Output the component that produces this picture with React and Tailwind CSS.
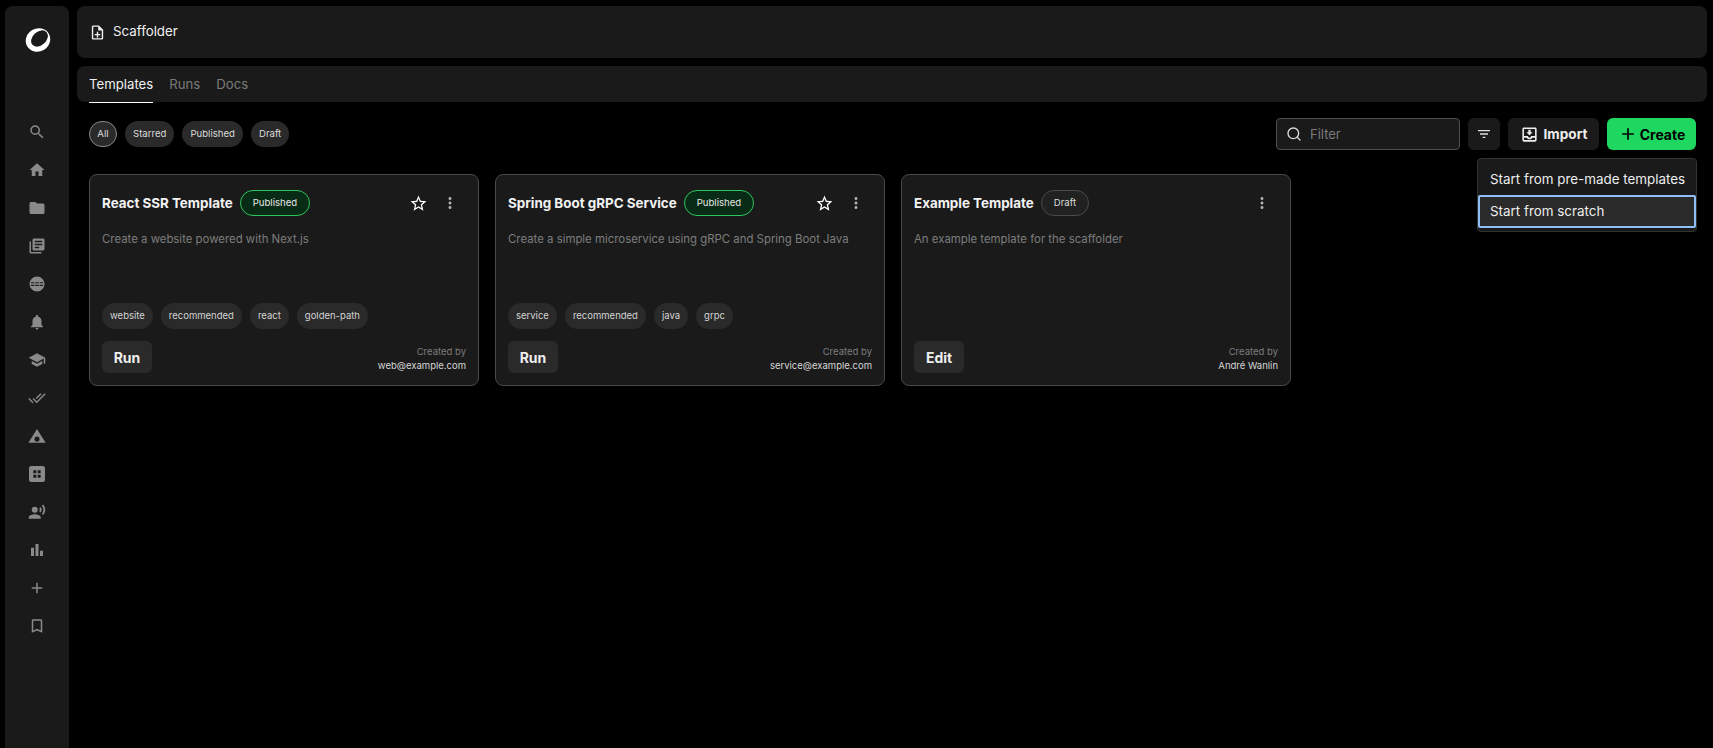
import React from "react";
import { Search } from "lucide-react";
import {
  MdSearch, MdHome, MdFolder, MdLibraryBooks, MdNotifications, MdSchool, MdDoneAll,
  MdRecordVoiceOver, MdBarChart, MdAdd, MdBookmarkBorder, MdOutlineNoteAdd,
  MdStarBorder, MdMoreVert, MdFilterList, MdOutlineMoveToInbox,
} from "react-icons/md";

const BallIcon = () => (
  <svg viewBox="0 0 24 24" className="w-[18px] h-[18px]" fill="currentColor">
    <path fillRule="evenodd" d="M12 2a10 10 0 1 0 0 20 10 10 0 0 0 0-20ZM4 9.500h4.500V11H4V9.500Zm5.700 0h4.600V11H9.700V9.500Zm5.800 0H20V11h-4.500V9.500ZM4 13h4.500v1.500H4V13Zm5.700 0h4.600v1.500H9.700V13Zm5.800 0H20v1.500h-4.500V13Z" />
  </svg>
);
const TriangleIcon = () => (
  <svg viewBox="0 0 24 24" className="w-[18px] h-[18px]" fill="currentColor">
    <path fillRule="evenodd" d="M12 2.500 23.500 21H.5L12 2.500Zm0 10a3.400 3.400 0 1 0 0 6.800 3.400 3.400 0 0 0 0-6.800Z" />
  </svg>
);
const GridIcon = () => (
  <svg viewBox="0 0 24 24" className="w-4 h-4" fill="currentColor">
    <path fillRule="evenodd" d="M3.500 0h17A3.500 3.500 0 0 1 24 3.500v17a3.500 3.500 0 0 1-3.500 3.500h-17A3.500 3.500 0 0 1 0 20.500v-17A3.500 3.500 0 0 1 3.500 0ZM6.500 6.500v4.500H11V6.500H6.500Zm6.500 0v4.500h4.500V6.500H13ZM6.500 13v4.500H11V13H6.500Zm6.500 0v4.500h4.500V13H13Z" />
  </svg>
);
const Logo = () => (
  <svg viewBox="0 0 26 24" className="w-[26px] h-[24px]">
    <ellipse cx="13" cy="12" rx="12.500" ry="11.500" fill="#fff" transform="rotate(-30 13 12)" />
    <ellipse cx="14.500" cy="10.500" rx="9.500" ry="6.800" fill="#1a1a1a" transform="rotate(-42 14.500 10.500)" />
  </svg>
);

const navIcons = [
  <MdSearch size={18} />, <MdHome size={18} />, <MdFolder size={18} />, <MdLibraryBooks size={18} />,
  <BallIcon />, <MdNotifications size={18} />, <MdSchool size={18} />, <MdDoneAll size={18} />,
  <TriangleIcon />, <GridIcon />, <MdRecordVoiceOver size={18} />, <MdBarChart size={18} />,
  <MdAdd size={18} />, <MdBookmarkBorder size={18} />,
];

const templates = [
  { title: "React SSR Template", status: "Published", desc: "Create a website powered with Next.js", tags: ["website", "recommended", "react", "golden-path"], action: "Run", by: "web@example.com", star: true },
  { title: "Spring Boot gRPC Service", status: "Published", desc: "Create a simple microservice using gRPC and Spring Boot Java", tags: ["service", "recommended", "java", "grpc"], action: "Run", by: "service@example.com", star: true },
  { title: "Example Template", status: "Draft", desc: "An example template for the scaffolder", tags: [], action: "Edit", by: "André Wanlin", star: false },
];

function Card({ t }) {
  return (
    <div className="w-[390px] h-[212px] rounded-lg border border-[#4a4a4a] bg-[#1a1a1a] pt-[15px] pb-3 px-3 flex flex-col">
      <div className="flex items-center h-[26px]">
        <span className="text-[13.400px] leading-[26px] font-bold text-[#f2f2f2]">{t.title}</span>
        <span className={`ml-[7px] h-[26px] flex items-center rounded-full border text-[9.600px] ${t.status === "Published" ? "px-[12px] border-[#2fc45e] bg-[#072b14] text-[#e8e8e8]" : "px-[12px] border-[#4a4a4a] bg-[#212121] text-[#dddddd]"}`}>
          {t.status}
        </span>
        <div className="ml-auto flex items-center">
          {t.star && <MdStarBorder size={19} className="text-white mr-[13px]" />}
          <MdMoreVert size={18} className="text-[#b0b0b0] mr-[7px]" />
        </div>
      </div>
      <p className="mt-[13px] text-[11.400px] leading-5 text-[#7d7d7d]">{t.desc}</p>
      <div className="mt-auto flex items-center gap-2 h-[26px]">
        {t.tags.map((tag) => (
          <span key={tag} className="h-[26px] flex items-center rounded-full bg-[#2a2a2a] px-2 text-[9.500px] text-[#d4d4d4]">{tag}</span>
        ))}
      </div>
      <div className="mt-3 flex items-end justify-between">
        <button className="h-8 w-[50px] rounded-md bg-[#2a2a2a] text-[14px] font-bold text-[#eeeeee]">{t.action}</button>
        <div className="text-right text-[9.500px] leading-[14px]">
          <div className="text-[#7d7d7d]">Created by</div>
          <div className="text-[#d6d6d6]">{t.by}</div>
        </div>
      </div>
    </div>
  );
}

export default function App() {
  return (
    <div className="relative h-[748px] w-[1713px] overflow-hidden bg-black flex gap-2 p-[6px] pl-[5px] pb-0 font-['Inter','Noto_Sans',sans-serif]">
      <aside className="w-[64px] shrink-0 rounded-t-lg bg-[#1a1a1a] flex flex-col items-center">
        <div className="mt-[22px] mb-[71px] ml-[2px]"><Logo /></div>
        <div className="flex flex-col items-center gap-[20px] text-[#8a8a8a]">
          {navIcons.map((ic, i) => (
            <span key={i} className="w-[18px] h-[18px] flex items-center justify-center">{ic}</span>
          ))}
        </div>
      </aside>

      <main className="flex-1 min-w-0">
        <header className="h-[52px] rounded-lg bg-[#1a1a1a] flex items-center pl-[12px] gap-[7px] text-[#f0f0f0]">
          <MdOutlineNoteAdd size={17} />
          <span className="text-[13.300px]">Scaffolder</span>
        </header>
        <nav className="mt-2 h-[36px] rounded-lg bg-[#1a1a1a] flex pl-3 gap-4 text-[13.200px]">
          <span className="h-[37px] pt-[2px] flex items-center border-b border-white text-[#f0f0f0]">Templates</span>
          <span className="pt-[2px] flex items-center text-[#7a7a7a]">Runs</span>
          <span className="pt-[2px] flex items-center text-[#7a7a7a]">Docs</span>
        </nav>

        <div className="mt-[16px] pl-3 pr-[11px] flex items-center">
          <div className="flex items-center gap-2 text-[9.600px] text-[#dddddd]">
            <span className="h-[26px] w-[28px] flex items-center justify-center rounded-full border border-[#8a8a8a] bg-[#2a2a2a]">All</span>
            <span className="h-[26px] flex items-center rounded-full bg-[#2a2a2a] px-2">Starred</span>
            <span className="h-[26px] flex items-center rounded-full bg-[#2a2a2a] px-2">Published</span>
            <span className="h-[26px] flex items-center rounded-full bg-[#2a2a2a] px-2">Draft</span>
          </div>
          <div className="ml-auto flex items-center gap-2">
            <div className="w-[184px] h-8 rounded border border-[#4d4d4d] bg-[#1a1a1a] flex items-center pl-[9px] gap-[8px]">
              <Search size={16} strokeWidth={2} className="text-[#dddddd]" />
              <span className="pt-[2px] text-[13px] text-[#7a7a7a]">Filter</span>
            </div>
            <button className="w-8 h-8 rounded-md bg-[#1a1a1a] flex items-center justify-center text-[#dddddd]"><MdFilterList size={16} /></button>
            <button className="w-[91px] h-8 rounded-md bg-[#1a1a1a] flex items-center justify-center gap-[5px] text-[13.600px] font-bold text-[#eeeeee]">
              <MdOutlineMoveToInbox size={19} />Import
            </button>
            <button className="w-[89px] h-8 rounded-md bg-[#1ed760] flex items-center justify-center gap-[2px] text-[14px] font-bold text-black">
              <MdAdd size={20} />Create
            </button>
          </div>
        </div>

        <div className="mt-[24px] pl-3 flex gap-4">
          {templates.map((t) => <Card key={t.title} t={t} />)}
        </div>
      </main>

      <div className="absolute left-[1477px] top-[158px] w-[220px] rounded border border-[#333333] bg-[#1a1a1a] pt-[4px] pb-[3px] text-[13.400px] text-[#eeeeee] shadow-lg">
        <div className="h-[32px] flex items-center pl-3 whitespace-nowrap">Start from pre-made templates</div>
        <div className="h-[33px] flex items-center border-2 border-[#8fbdf5] bg-[#2a2a2a] pl-[10px] rounded-[2px]">Start from scratch</div>
      </div>
    </div>
  );
}
